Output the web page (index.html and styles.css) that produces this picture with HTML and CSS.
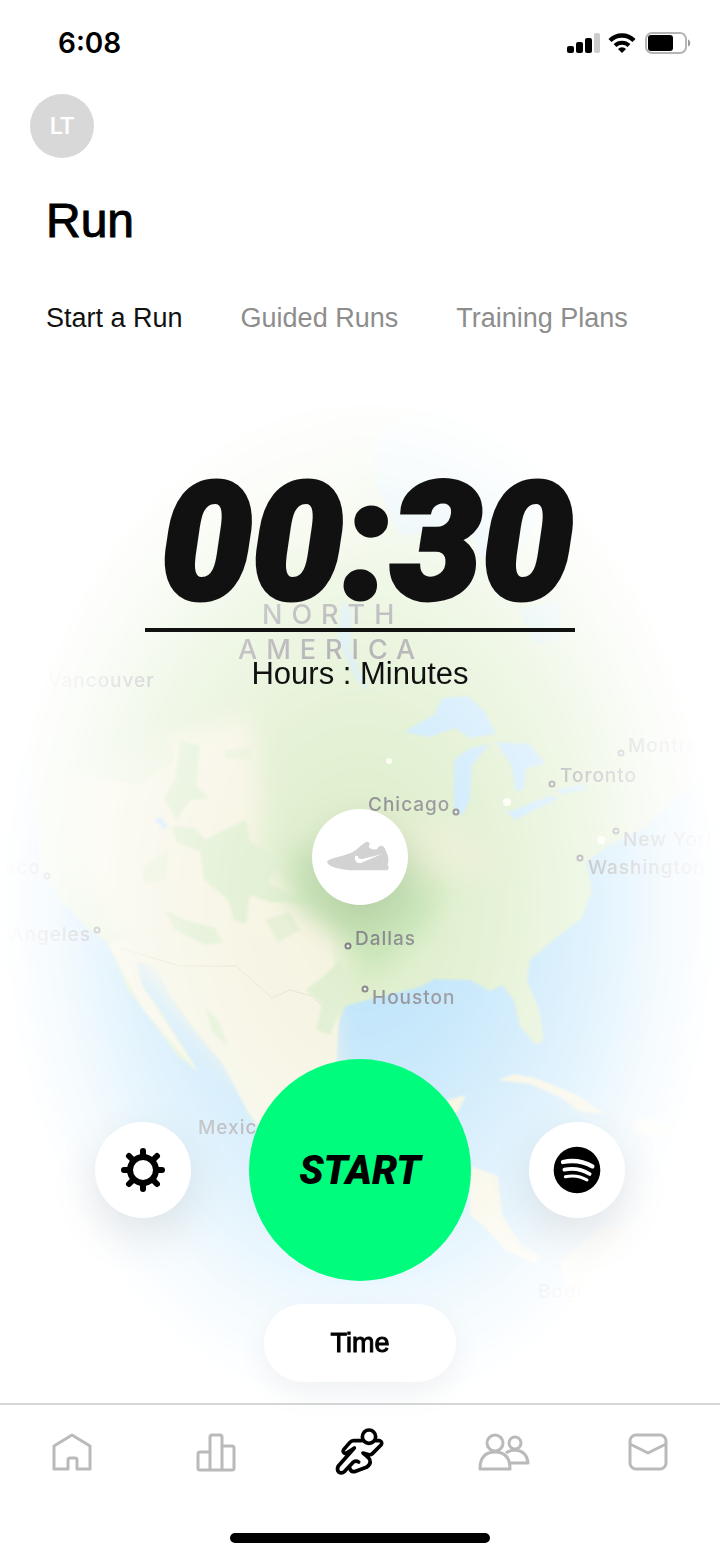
FILE: index.html
```
<!DOCTYPE html>
<html lang="en">
<head>
    <meta charset="UTF-8">
    <meta name="viewport" content="width=device-width, initial-scale=1.0">
    <title>Run</title>
    <link rel="stylesheet" href="styles.css">
</head>
<body>
    <div class="status-bar">
        <div class="clock">6:08</div>
        <div class="status-icons">
            <svg width="34" height="22" viewBox="0 0 34 22" aria-hidden="true">
                <rect x="1" y="14" width="7" height="7" rx="2"/>
                <rect x="10" y="10" width="7" height="11" rx="2"/>
                <rect x="19" y="6" width="7" height="15" rx="2"/>
                <rect x="28" y="1" width="6" height="20" rx="2" fill="#cccccc"/>
            </svg>
            <svg width="28" height="22" viewBox="0 0 28 22" aria-hidden="true">
                <path d="M2 8.500a17 17 0 0 1 24 0" fill="none" stroke="#000" stroke-width="4.400"/>
                <path d="M7 13.500a10 10 0 0 1 14 0" fill="none" stroke="#000" stroke-width="4"/>
                <path d="M14 21l-4-4a5.600 5.600 0 0 1 8 0z"/>
            </svg>
            <svg width="48" height="24" viewBox="0 0 48 24" aria-hidden="true">
                <rect x="2" y="2" width="40" height="20" rx="6" fill="#fff" stroke="#b5b5b5" stroke-width="2"/>
                <rect x="4" y="4" width="25" height="16" rx="3"/>
                <path d="M44 8.500c3 1 3 6 0 7z" fill="#9a9a9a"/>
            </svg>
        </div>
    </div>

    <header class="header">
        <button class="avatar" type="button" aria-label="Profile">LT</button>
        <h1>Run</h1>
        <nav class="tabs">
            <a class="tab active" href="#start">Start a Run</a>
            <a class="tab" href="#guided">Guided Runs</a>
            <a class="tab" href="#plans">Training Plans</a>
        </nav>
    </header>

    <main class="run-panel">
        <svg class="map" viewBox="0 380 720 1023" preserveAspectRatio="xMidYMid slice" aria-hidden="true">
            <defs>
                <filter id="soft"><feGaussianBlur stdDeviation="1"/></filter>
                <filter id="softer" x="-30%" y="-30%" width="160%" height="160%"><feGaussianBlur stdDeviation="12"/></filter>
            </defs>
            <rect x="0" y="380" width="720" height="1023" fill="#b9e2fa"/>

            <!-- mainland -->
            <path filter="url(#soft)" fill="#dcedc8" d="M0 370H720V770L672 800 645 828 610 845 586 862 592 890 582 918 556 938 530 960 527 980 540 1012 544 1040 536 1045 520 1026 514 1000 502 985 490 991 470 980 435 979 420 987 375 998 345 1006 336 1030 335 1065 350 1190 300 1175 265 1140 247 1110 250 1095 222 1062 194 1030 172 998 158 968 136 960 142 986 160 1010 180 1042 198 1072 178 1056 160 1032 144 1010 128 990 118 965 108 944 84 924 60 900 42 870 34 800 20 740 24 700 0 640Z"/>

            <!-- dry west and mexico -->
            <g filter="url(#softer)" fill="#f5f2de">
                <path d="M70 780L160 740 250 715 262 800 255 860 290 890 345 930 330 1000 335 1060 350 1150 290 1130 230 1070 170 1000 110 930 70 860Z"/>
                <path d="M60 500L330 380 370 560 200 520Z" opacity=".4"/>
            </g>
            <path filter="url(#soft)" fill="#f4f2de" d="M108 944L150 930 330 940 340 1000 336 1065 350 1180 270 1140 247 1110 222 1062 172 998 158 968 136 960 142 986 198 1072 144 1010Z"/>

            <!-- forests -->
            <g filter="url(#soft)" fill="#dcedcb">
                <path d="M60 770L100 745 160 725 175 760 140 785 90 775Z" opacity=".5"/>
                <path d="M180 740L200 745 196 785 208 798 190 800 176 820 164 798 175 780Z"/>
                <path d="M225 750L250 748 252 760 226 758Z" opacity=".6"/>
                <path d="M172 826L195 828 205 840 228 828 246 820 250 842 265 850 280 862 268 882 290 895 330 890 330 905 270 902 250 895 246 924 234 920 228 900 204 880 200 852 176 842Z"/>
                <path d="M165 910L185 920 215 928 222 942 205 945 175 930Z"/>
                <path d="M168 850L165 880 145 884 142 868Z" opacity=".6"/>
                <path d="M265 920L290 912 300 930 278 942Z" opacity=".7"/>
                <path d="M306 990L325 975 340 960 350 985 345 1000 330 1035 316 1030 322 1004Z"/>
                <path d="M205 1008L218 1020 228 1046 212 1032Z"/>
            </g>
            <path filter="url(#softer)" fill="#c6e4b4" d="M290 850L400 840 450 880 430 930 370 980 345 940 290 900Z"/>
            <path filter="url(#softer)" fill="#f3eed6" opacity=".4" d="M380 830L460 820 500 870 420 890Z"/>

            <!-- lakes and bays -->
            <g filter="url(#soft)" fill="#c7e7fb">
                <path d="M372 440L430 405 520 430 560 480 520 550 500 575 480 555 470 530 400 535 378 490Z" opacity=".75"/>
                <path d="M520 610L560 600 560 640 535 645Z" opacity=".6"/>
                <path d="M342 600L352 612 350 650 370 692 356 680 338 640Z" opacity=".7"/>
                <path d="M404 732L435 714 442 698 468 696 485 712 496 734 470 738 455 728 430 737Z"/>
                <path d="M454 760L470 748 490 744 472 765 470 800 462 816 454 808Z"/>
                <path d="M496 742L530 744 545 764 526 768 524 788 516 792 512 766Z"/>
                <path d="M506 812L520 808 548 796 560 798 530 812 516 820Z"/>
                <path d="M556 790L585 784 584 790 562 794Z"/>
                <path d="M154 820L160 817 168 826 164 829Z"/>
            </g>

            <!-- islands, central and south america -->
            <g filter="url(#soft)" fill="#f4f0d4">
                <path d="M448 1100L466 1095 458 1112 446 1116Z"/>
                <path d="M498 1080L514 1074 535 1078 575 1094 606 1114 580 1112 562 1098 530 1084Z"/>
                <path d="M632 1120L650 1118 676 1130 660 1138 636 1132Z"/>
                <path d="M470 1166L498 1176 502 1215 522 1246 542 1256 536 1264 505 1250 486 1228 470 1215Z"/>
                <path d="M560 1262L600 1230 720 1210 720 1403 540 1403 578 1330Z"/>
            </g>

            <path d="M120 948L180 966H236L272 998 290 990 312 996 330 1014" fill="none" stroke="#e6dfc9" stroke-width="1"/>
            <g fill="#fffef3">
                <circle cx="389" cy="761" r="3"/>
                <circle cx="507" cy="802" r="4"/>
                <circle cx="601" cy="840" r="4"/>
            </g>

            <g class="continent">
                <text x="262" y="624">NORTH</text>
                <text x="238" y="659">AMERICA</text>
            </g>
            <g class="city">
                <text x="48" y="687">Vancouver</text>
                <text x="5" y="874">sco</text>
                <text x="10" y="941">Angeles</text>
                <text x="368" y="811">Chicago</text>
                <text x="355" y="945">Dallas</text>
                <text x="372" y="1004">Houston</text>
                <text x="560" y="782">Toronto</text>
                <text x="628" y="752">Montreal</text>
                <text x="623" y="846">New York</text>
                <text x="588" y="874">Washington</text>
                <text x="198" y="1134">Mexico City</text>
                <text x="538" y="1298">Bogota</text>
            </g>
            <g class="city-dot">
                <circle cx="456" cy="812" r="2.500"/>
                <circle cx="348" cy="946" r="2.500"/>
                <circle cx="365" cy="989" r="2.500"/>
                <circle cx="552" cy="784" r="2.500"/>
                <circle cx="621" cy="753" r="2.500"/>
                <circle cx="616" cy="831" r="2.500"/>
                <circle cx="580" cy="858" r="2.500"/>
                <circle cx="97" cy="930" r="2.500"/>
                <circle cx="47" cy="876" r="2.500"/>
            </g>
        </svg>

        <div class="goal">
            <input class="goal-value" id="goal" type="text" value="00:30">
            <label class="goal-label" for="goal">Hours : Minutes</label>
        </div>

        <button class="round-button" type="button" aria-label="Shoes">
            <svg width="96" height="96" viewBox="36 42 288 288" aria-hidden="true">
                <path fill="#d2d2d2" d="M82 198Q86 192 128 182Q160 174 174 160Q185 149 198 141Q208 138 209 147L206 157Q216 166 231 163Q235 152 244 152Q253 153 257 166L264 184Q267 198 263 211Q270 219 262 226H150Q92 220 82 204Z"/>
                <path fill="#fff" d="M165 182Q162 206 183 204L244 178L190 191Q174 194 174 183Z"/>
            </svg>
        </button>

        <div class="actions">
            <button class="round-button" type="button" aria-label="Settings">
                <svg width="48" height="48" viewBox="-24 -24 48 48" aria-hidden="true">
                    <g stroke="#000" stroke-width="6" stroke-linecap="round">
                        <path d="M0-19V-14M0 19V14M-19 0H-14M19 0H14M-14-14L-10-10M14-14L10-10M-14 14L-10 10M14 14L10 10"/>
                        <circle r="13" fill="#fff"/>
                    </g>
                </svg>
            </button>
            <button class="start-button" type="button">START</button>
            <button class="round-button" type="button" aria-label="Music">
                <svg width="48" height="48" viewBox="-72 -72 144 144" aria-hidden="true">
                    <circle r="70"/>
                    <g fill="none" stroke="#fff" stroke-linecap="round">
                        <path d="M-42-24Q5-34 46-11" stroke-width="13"/>
                        <path d="M-38-1Q3-9 38 12" stroke-width="11"/>
                        <path d="M-35 20Q2 13 30 30" stroke-width="9"/>
                    </g>
                </svg>
            </button>
        </div>

        <button class="time-button" type="button">Time</button>
    </main>

    <footer class="footer">
        <nav class="tab-bar">
            <a href="#home" aria-label="Home">
                <svg class="nav-icon" viewBox="0 0 52 52"><path d="M8 43V20L26 9L44 20V43H31V34Q31 32 29 32H24Q22 32 22 34V43Z"/></svg>
            </a>
            <a href="#activity" aria-label="Activity">
                <svg class="nav-icon" viewBox="0 0 52 52"><path d="M20 44H10Q8 44 8 42V28Q8 26 10 26H20M20 44V11Q20 9 22 9H30Q32 9 32 11V44ZM32 44H42Q44 44 44 42V22Q44 20 42 20H32"/></svg>
            </a>
            <a href="#run" aria-label="Run">
                <svg class="nav-icon current" viewBox="42 33 156 156">
                    <circle cx="147" cy="65" r="20"/>
                    <path d="M124 77H101Q94 77 89 83L71 104Q67 111 73 114Q79 117 86 110L103 99L55 153Q49 164 56 171Q65 177 74 169L98 143Q106 135 116 141"/>
                    <path d="M89 158Q91 171 103 170L139 157Q153 148 150 136Q149 130 129 114L147 119Q153 120 158 115L183 90Q189 81 179 77H170"/>
                </svg>
            </a>
            <a href="#club" aria-label="Club">
                <svg class="nav-icon" viewBox="0 0 52 52">
                    <circle cx="17" cy="17" r="8"/>
                    <path d="M2 43Q2 26 17 26T32 43Z"/>
                    <circle cx="37" cy="17" r="6"/>
                    <path d="M28 27Q32 24 37 24Q49 25 50 37H32"/>
                </svg>
            </a>
            <a href="#inbox" aria-label="Inbox">
                <svg class="nav-icon" viewBox="0 0 52 52"><rect x="8" y="9" width="36" height="34" rx="6"/><path d="M8 18L26 27L44 18"/></svg>
            </a>
        </nav>
        <div class="home-indicator"></div>
    </footer>
</body>
</html>
```
FILE: styles.css
```
* {
    box-sizing: border-box;
}
body {
    margin: 0;
    min-height: 100vh;
    display: flex;
    flex-direction: column;
    background: #fff;
    color: #111;
    font-family: "Liberation Sans", Arial, sans-serif;
}
button {
    border: none;
    padding: 0;
    font-family: inherit;
    cursor: pointer;
}
a {
    text-decoration: none;
}
.status-bar {
    display: flex;
    align-items: center;
    justify-content: space-between;
    height: 86px;
    padding: 0 28px 0 58px;
}
.clock {
    font-family: Inter, sans-serif;
    font-size: 28px;
    font-weight: 600;
    color: #000;
}
.status-icons {
    display: flex;
    align-items: center;
    gap: 8px;
}
.header {
    padding: 8px 46px 0;
}
.avatar {
    display: block;
    width: 64px;
    height: 64px;
    margin-left: -16px;
    border-radius: 50%;
    background: #d8d8d8;
    color: #fff;
    font-family: Roboto, sans-serif;
    font-size: 24px;
    font-weight: 500;
}
h1 {
    margin: 35px 0 0;
    font-size: 48px;
    line-height: 56px;
    font-weight: normal;
    color: #000;
    -webkit-text-stroke: 1px #000;
}
.tabs {
    display: flex;
    gap: 58px;
    margin-top: 53px;
}
.tab {
    font-size: 27px;
    line-height: 32px;
    color: #8d8d8d;
    white-space: nowrap;
}
.tab.active {
    color: #111;
}
.run-panel {
    position: relative;
    flex: 1;
    display: flex;
    flex-direction: column;
    align-items: center;
    margin-top: 46px;
    padding: 84px 24px 20px;
}
/* map sits behind the controls and fades out to white */
.map {
    position: absolute;
    inset: 0;
    width: 100%;
    height: 100%;
    -webkit-mask-image: radial-gradient(50% 50% at 50% 51%, #000 0%, rgba(0, 0, 0, .75) 35%, rgba(0, 0, 0, .42) 65%, rgba(0, 0, 0, .14) 85%, transparent 100%);
    mask-image: radial-gradient(50% 50% at 50% 51%, #000 0%, rgba(0, 0, 0, .75) 35%, rgba(0, 0, 0, .42) 65%, rgba(0, 0, 0, .14) 85%, transparent 100%);
}
.map text {
    font-family: Inter, sans-serif;
    fill: #85858a;
}
.continent text {
    font-size: 27px;
    font-weight: 500;
    letter-spacing: 9px;
}
.city text {
    font-size: 19px;
    font-weight: 500;
    letter-spacing: 1px;
}
.city-dot circle {
    fill: #eef3e6;
    stroke: #7b7b7b;
    stroke-width: 2;
}
.goal,
.actions,
.run-panel > button {
    position: relative;
}
.goal {
    width: 64%;
    display: flex;
    flex-direction: column;
    align-items: center;
}
.goal-value {
    width: 100%;
    height: 168px;
    padding: 0 0 6px 14px;
    border: none;
    border-bottom: 4px solid #111;
    border-radius: 0;
    background: transparent;
    color: #111;
    font-family: Roboto, sans-serif;
    font-size: 162px;
    font-style: italic;
    font-weight: 900;
    text-align: center;
    -webkit-text-stroke: 5px #111;
}
.goal-label {
    margin-top: 24px;
    font-size: 31px;
    line-height: 36px;
}
.round-button {
    display: flex;
    align-items: center;
    justify-content: center;
    width: 96px;
    height: 96px;
    border-radius: 50%;
    background: #fff;
    box-shadow: 0 16px 48px rgba(0, 0, 0, .1);
}
.goal + .round-button {
    margin-top: 117px;
}
.actions {
    display: flex;
    align-items: center;
    justify-content: center;
    gap: 58px;
    margin-top: 154px;
}
.start-button {
    width: 222px;
    height: 222px;
    border-radius: 50%;
    background: #00fc7d;
    color: #000;
    font-family: Roboto, sans-serif;
    font-size: 40px;
    font-style: italic;
    font-weight: 900;
}
.time-button {
    width: 192px;
    height: 78px;
    margin-top: 23px;
    border-radius: 40px;
    background: #fff;
    color: #000;
    font-size: 27px;
    -webkit-text-stroke: 1px #000;
    box-shadow: 0 12px 32px rgba(0, 0, 0, .05);
}
.footer {
    border-top: 2px solid #d6d7da;
    background: #fff;
}
.tab-bar {
    display: grid;
    grid-template-columns: repeat(5, 1fr);
    justify-items: center;
    padding-top: 21px;
}
.nav-icon {
    display: block;
    width: 52px;
    height: 52px;
    fill: none;
    stroke: #bababa;
    stroke-width: 3;
    stroke-linejoin: round;
}
.nav-icon.current {
    stroke: #000;
    stroke-width: 11;
    stroke-linecap: round;
}
.home-indicator {
    width: 36%;
    height: 10px;
    margin: 55px auto 15px;
    border-radius: 5px;
    background: #000;
}
```
